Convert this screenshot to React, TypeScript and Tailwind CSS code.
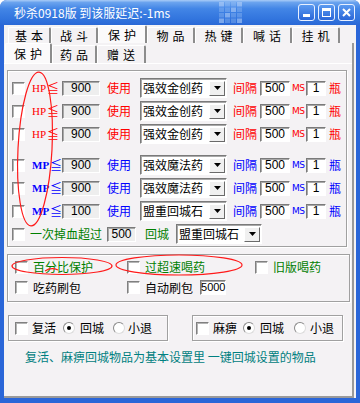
import React from 'react'

const RED = 'text-[#ff0000]'
const BLUE = 'text-[#0000ff]'

function Check({ className = '' }: { className?: string }) {
  return (
    <span
      className={`block w-[13px] h-[13px] shrink-0 bg-white border border-t-[#808080] border-l-[#808080] border-b-white border-r-white shadow-[inset_1px_1px_0_#b4b4b4] ${className}`}
    />
  )
}

function Radio({ on, className = '' }: { on?: boolean; className?: string }) {
  return (
    <span
      className={`flex items-center justify-center w-[12px] h-[12px] shrink-0 rounded-full bg-white border border-t-[#8a8a8a] border-l-[#8a8a8a] border-b-[#dcdcdc] border-r-[#dcdcdc] ${className}`}
    >
      {on && <span className="block w-[4px] h-[4px] rounded-full bg-black" />}
    </span>
  )
}

function Field({ value, w, gray, className = '' }: { value: string; w: number; gray?: boolean; className?: string }) {
  return (
    <span
      style={{ width: w }}
      className={`flex items-center justify-center h-[15px] shrink-0 border border-t-[#7a7a7a] border-l-[#7a7a7a] border-b-white border-r-white shadow-[inset_1px_1px_0_#a8a8a8] font-['Liberation_Sans',sans-serif] text-[12px] text-black ${
        gray ? 'bg-[#eeeeee]' : 'bg-white'
      } ${className}`}
    >
      {value}
    </span>
  )
}

function Select({ text, w, className = '' }: { text: string; w: number; className?: string }) {
  return (
    <span
      style={{ width: w }}
      className={`flex items-center h-[20px] shrink-0 bg-white border border-t-[#7a7a7a] border-l-[#7a7a7a] border-b-white border-r-white shadow-[inset_1px_1px_0_#a8a8a8] ${className}`}
    >
      <span className="flex-1 pl-[2px] text-black text-[12px]">{text}</span>
      <span className="flex items-center justify-center w-[16px] h-[15px] mr-[1px] bg-[#f0f0f0] border border-t-white border-l-white border-b-[#6a6a6a] border-r-[#6a6a6a]">
        <svg width="7" height="4" viewBox="0 0 7 4">
          <path d="M0 0h7L3.5 4z" fill="#000" />
        </svg>
      </span>
    </span>
  )
}

function Label({ kind }: { kind: 'HP' | 'MP' }) {
  const c = kind === 'HP' ? RED : BLUE
  return (
    <span className={`ml-[7px] w-[30px] shrink-0 flex items-center ${c}`}>
      <span className={`font-['Liberation_Serif',serif] text-[11px] ${kind === 'MP' ? 'font-bold' : ''}`}>{kind}</span>
      <span className="text-[12px] ml-[1px]">≦</span>
    </span>
  )
}

type Row = { kind: 'HP' | 'MP'; hp: string; item: string }

function PotionRow({ kind, hp, item }: Row) {
  const c = kind === 'HP' ? RED : BLUE
  return (
    <div className="flex items-center h-[22px]">
      <Check className="ml-[4px]" />
      <Label kind={kind} />
      <Field value={hp} w={38} gray />
      <span className={`ml-[7px] w-[24px] shrink-0 ${c}`}>使用</span>
      <Select text={item} w={87} className="ml-[9px]" />
      <span className={`ml-[6px] w-[24px] shrink-0 ${c}`}>间隔</span>
      <Field value="500" w={30} className="ml-[3px]" />
      <span className={`ml-[2px] w-[14px] shrink-0 font-['DejaVu_Sans',sans-serif] text-[9px] tracking-[-0.5px] ${c}`}>MS</span>
      <Field value="1" w={20} />
      <span className={`ml-[3px] ${c}`}>瓶</span>
    </div>
  )
}

const hpRows: Row[] = [
  { kind: 'HP', hp: '900', item: '强效金创药' },
  { kind: 'HP', hp: '900', item: '强效金创药' },
  { kind: 'HP', hp: '900', item: '强效金创药' },
]
const mpRows: Row[] = [
  { kind: 'MP', hp: '900', item: '强效魔法药' },
  { kind: 'MP', hp: '900', item: '强效魔法药' },
  { kind: 'MP', hp: '100', item: '盟重回城石' },
]

function TitleBar() {
  return (
    <div className="relative h-[25px] bg-[linear-gradient(180deg,#a9ccf7_0%,#6aa3ee_10%,#4285e6_35%,#3275de_75%,#2a68d6_100%)]">
      <span className="absolute left-[14px] top-[6px] text-white text-[12px] leading-[13px]">秒杀0918版 到该服延迟:-1ms</span>
      {/* faint logo squares */}
      <svg className="absolute left-[219px] top-[2px]" width="24" height="22" viewBox="0 0 24 22">
        {[0, 1, 2, 3].map((r) =>
          [0, 1, 2, 3].map((c) => (
            <rect
              key={`${r}-${c}`}
              x={c * 6}
              y={r * 5.5}
              width="5"
              height="4.5"
              fill="#bcd6fa"
              opacity={(r + c) % 3 === 0 ? 0.55 : 0.28}
            />
          ))
        )}
      </svg>
      <div className="absolute right-[5px] top-[4px] flex gap-[3px]">
        <span className="flex items-end justify-center pb-[3px] w-[17px] h-[17px] rounded-[3px] border border-[#e8f0ff] bg-[linear-gradient(180deg,#5b9af0,#2a66d8)]">
          <span className="block w-[7px] h-[3px] bg-white" />
        </span>
        <span className="flex items-center justify-center w-[17px] h-[17px] rounded-[3px] border border-[#e8f0ff] bg-[linear-gradient(180deg,#5b9af0,#2a66d8)]">
          <span className="block w-[9px] h-[9px] border border-white border-t-[3px]" />
        </span>
        <span className="flex items-center justify-center w-[17px] h-[17px] rounded-[3px] border border-[#e8f0ff] bg-[linear-gradient(180deg,#5b9af0,#2a66d8)]">
          <svg width="9" height="9" viewBox="0 0 9 9">
            <path d="M1 1l7 7M8 1L1 8" stroke="#fff" strokeWidth="2" />
          </svg>
        </span>
      </div>
    </div>
  )
}

const outerTabs: [string, number][] = [
  ['基本', 43],
  ['战斗', 47],
  ['保护', 49],
  ['物品', 48],
  ['热键', 48],
  ['喊话', 49],
  ['挂机', 48],
]
const innerTabs: [string, number][] = [
  ['保护', 47],
  ['药品', 45],
  ['赠送', 49],
]

function Tab({ label, w, active }: { label: string; w: number; active?: boolean }) {
  return (
    <span
      style={{ width: w }}
      className={`flex items-center justify-center shrink-0 pl-[4px] tracking-[4px] text-[12px] text-black border-t border-l border-white border-r-2 border-r-[#8c8c8c] rounded-t-[2px] ${
        active ? 'bg-[#fbfafb]' : ''
      }`}
    >
      {label}
    </span>
  )
}

export default function App() {
  return (
    <div className="relative w-[360px] h-[403px] overflow-hidden rounded-t-[7px] bg-[#2a66d8] font-['Noto_Sans_CJK_SC',sans-serif] text-[12px] leading-none select-none">
      <TitleBar />
      <div className="ml-[4px] mr-[4px] h-[373px] bg-[#f4f2f4] flex flex-col">
        {/* outer tabs */}
        <div className="flex items-end h-[18px] pl-[4px]">
          {outerTabs.map(([l, w]) => (
            <div key={l} className={`flex ${l === '保护' ? 'h-[18px]' : 'h-[16px]'}`}>
              <Tab label={l} w={w} active={l === '保护'} />
            </div>
          ))}
        </div>
        <div className="w-[350px] h-[355px] border-r-2 border-b-2 border-[#9a9a9a] flex flex-col">
          {/* inner tabs */}
          <div className="flex items-end h-[20px] pl-[1px]">
            {innerTabs.map(([l, w], i) => (
              <div key={l} className={`flex ${i === 0 ? 'h-[20px]' : 'h-[18px]'}`}>
                <Tab label={l} w={w} active={i === 0} />
              </div>
            ))}
          </div>
          <div className="flex-1 border-t border-white pl-[3px] flex flex-col">
            {/* potions group */}
            <div className="mt-[6px] w-[340px] h-[177px] border border-[#a0a0a0] shadow-[inset_1px_1px_0_#fff,1px_1px_0_#fff] pt-[6px] flex flex-col">
              <div className="flex flex-col gap-[1px]">
                {hpRows.map((r, i) => (
                  <PotionRow key={i} {...r} />
                ))}
              </div>
              <div className="mt-[9px] flex flex-col gap-[1px]">
                {mpRows.map((r, i) => (
                  <PotionRow key={i} {...r} />
                ))}
                <div className="flex items-center h-[22px]">
                  <Check className="ml-[4px]" />
                  <span className="ml-[5px] w-[72px] shrink-0 text-[#008000]">一次掉血超过</span>
                  <Field value="500" w={29} gray className="ml-[5px]" />
                  <span className="ml-[9px] w-[24px] shrink-0 text-[#008000]">回城</span>
                  <Select text="盟重回城石" w={86} className="ml-[7px]" />
                </div>
              </div>
            </div>

            {/* options group */}
            <div className="mt-[7px] w-[343px] h-[48px] border border-[#a0a0a0] shadow-[inset_1px_1px_0_#fff,1px_1px_0_#fff] pt-[2px] flex flex-col">
              <div className="flex items-center h-[20px]">
                <div className="w-[112px] flex items-center shrink-0">
                  <Check className="ml-[7px]" />
                  <span className="ml-[5px] text-[#008000]">百分比保护</span>
                </div>
                <div className="w-[128px] flex items-center shrink-0">
                  <Check className="ml-[7px]" />
                  <span className="ml-[5px] text-[#008000]">过超速喝药</span>
                </div>
                <div className="flex items-center">
                  <Check className="ml-[7px]" />
                  <span className="ml-[5px] text-[#008000]">旧版喝药</span>
                </div>
              </div>
              <div className="flex items-center h-[21px]">
                <div className="w-[112px] flex items-center shrink-0">
                  <Check className="ml-[7px]" />
                  <span className="ml-[5px] text-black">吃药刷包</span>
                </div>
                <div className="flex items-center">
                  <Check className="ml-[7px]" />
                  <span className="ml-[5px] text-black">自动刷包</span>
                  <Field value="5000" w={26} className="ml-[7px] !text-[11px] !justify-start" />
                </div>
              </div>
            </div>

            {/* revive / paralysis */}
            <div className="mt-[13px] flex items-start">
              <div className="ml-[1px] w-[160px] h-[26px] border border-[#a0a0a0] shadow-[inset_1px_1px_0_#fff,1px_1px_0_#fff] flex items-center text-black">
                <Check className="ml-[6px]" />
                <span className="ml-[4px]">复活</span>
                <Radio on className="ml-[7px]" />
                <span className="ml-[5px]">回城</span>
                <Radio className="ml-[9px]" />
                <span className="ml-[3px]">小退</span>
              </div>
              <div className="ml-[24px] w-[151px] h-[26px] border border-[#a0a0a0] shadow-[inset_1px_1px_0_#fff,1px_1px_0_#fff] flex items-center text-black">
                <Check className="ml-[3px]" />
                <span className="ml-[4px]">麻痹</span>
                <Radio on className="ml-[6px]" />
                <span className="ml-[5px]">回城</span>
                <Radio className="ml-[10px]" />
                <span className="ml-[4px]">小退</span>
              </div>
            </div>
            <div className="mt-[9px] ml-[18px] text-[#008080] leading-[14px]">
              复活、麻痹回城物品为基本设置里 一键回城设置的物品
            </div>
          </div>
        </div>
      </div>

      {/* hand-drawn red markup over the window */}
      <svg className="absolute left-0 top-0 pointer-events-none" width="360" height="403" viewBox="0 0 360 403">
        <g fill="none" stroke="#ff1a1a" strokeWidth="1.2">
          <ellipse cx="35" cy="149" rx="17" ry="77" transform="rotate(3 35 149)" />
          <ellipse cx="62" cy="266" rx="50" ry="8.5" />
          <ellipse cx="179" cy="265" rx="63" ry="10" />
          <path d="M45 271 q6 -4 13 -1" />
        </g>
      </svg>
    </div>
  )
}
